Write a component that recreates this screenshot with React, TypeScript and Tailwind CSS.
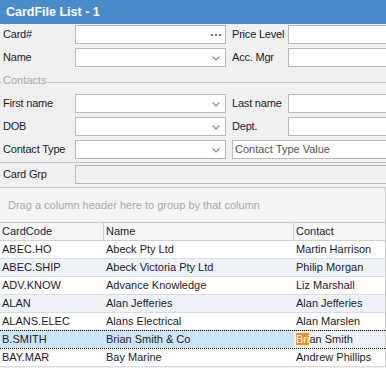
import React from 'react';

interface CardRow {
  code: string;
  name: string;
  contact: string;
}

const rows: CardRow[] = [
  { code: 'ABEC.HO', name: 'Abeck Pty Ltd', contact: 'Martin Harrison' },
  { code: 'ABEC.SHIP', name: 'Abeck Victoria Pty Ltd', contact: 'Philip Morgan' },
  { code: 'ADV.KNOW', name: 'Advance Knowledge', contact: 'Liz Marshall' },
  { code: 'ALAN', name: 'Alan Jefferies', contact: 'Alan Jefferies' },
  { code: 'ALANS.ELEC', name: 'Alans Electrical', contact: 'Alan Marslen' },
  { code: 'B.SMITH', name: 'Brian Smith & Co', contact: 'Brian Smith' },
  { code: 'BAY.MAR', name: 'Bay Marine', contact: 'Andrew Phillips' },
];

const Chevron = () => (
  <svg width="8" height="5" viewBox="0 0 8 5" className="absolute right-[5px] top-[7px]">
    <path d="M0.5 0.5 L4 4 L7.5 0.5" fill="none" stroke="#8a8a8a" strokeWidth="1.2" />
  </svg>
);

// Left-hand input, 151px wide
const Field = ({ kind }: { kind?: 'drop' | 'dots' }) => (
  <div className="relative w-[151px] h-[19px] bg-white border border-[#b9b9b9] shrink-0">
    {kind === 'drop' && <Chevron />}
    {kind === 'dots' && (
      <div className="absolute right-[4px] top-[8px] flex gap-[2px]">
        <span className="w-[2px] h-[2px] bg-[#6a6a6a]" />
        <span className="w-[2px] h-[2px] bg-[#6a6a6a]" />
        <span className="w-[2px] h-[2px] bg-[#6a6a6a]" />
      </div>
    )}
  </div>
);

const Label = ({ text, w }: { text: string; w: string }) => (
  <span className={`${w} shrink-0 text-[11px] tracking-[-0.2px] text-[#1b1b2e] leading-[19px] whitespace-nowrap`}>{text}</span>
);

const Box = ({ w }: { w: string }) => <div className={`${w} h-[19px] bg-white border border-[#b9b9b9] shrink-0`} />;

export default function App() {
  return (
    <div className="w-[386px] h-[368px] overflow-hidden bg-[#f0f0f0] font-['Liberation_Sans',Arial,sans-serif]">
      {/* Title */}
      <div className="h-[24px] bg-[#4a8cca] text-white font-bold text-[12.5px] px-[6px] flex items-center">
        CardFile List - 1
      </div>

      {/* Form */}
      <div className="pt-[1px] flex flex-col">
        <div className="flex items-center h-[19px] pl-[3px]">
          <Label text="Card#" w="w-[72px]" />
          <Field kind="dots" />
          <span className="w-[6px] shrink-0" />
          <Label text="Price Level" w="w-[56px]" />
          <Box w="w-[100px]" />
        </div>
        <div className="flex items-center h-[19px] pl-[3px] mt-[4px]">
          <Label text="Name" w="w-[72px]" />
          <Field kind="drop" />
          <span className="w-[6px] shrink-0" />
          <Label text="Acc. Mgr" w="w-[56px]" />
          <Box w="w-[100px]" />
        </div>

        {/* Contacts group caption */}
        <div className="h-[27px] flex items-center">
          <span className="w-[2px] h-px bg-[#c8c8c8] mt-[3px]" />
          <span className="px-[1px] text-[11px] text-[#a8a8a8]">Contacts</span>
          <span className="flex-1 h-px bg-[#c8c8c8] mt-[3px]" />
        </div>

        <div className="flex items-center h-[19px] pl-[3px]">
          <Label text="First name" w="w-[72px]" />
          <Field kind="drop" />
          <span className="w-[6px] shrink-0" />
          <Label text="Last name" w="w-[56px]" />
          <Box w="w-[100px]" />
        </div>
        <div className="flex items-center h-[19px] pl-[3px] mt-[4px]">
          <Label text="DOB" w="w-[72px]" />
          <Field kind="drop" />
          <span className="w-[6px] shrink-0" />
          <Label text="Dept." w="w-[56px]" />
          <Box w="w-[100px]" />
        </div>
        <div className="flex items-center h-[19px] pl-[3px] mt-[4px]">
          <Label text="Contact Type" w="w-[72px]" />
          <Field kind="drop" />
          <span className="w-[6px] shrink-0" />
          <div className="w-[160px] h-[19px] bg-white border border-[#b9b9b9] shrink-0 text-[11px] leading-[17px] pl-[2px] text-[#555]">
            Contact Type Value
          </div>
        </div>

        <div className="h-px bg-[#c4c4c4] mt-[3px]" />

        <div className="flex items-center h-[19px] pl-[3px] mt-[2px]">
          <Label text="Card Grp" w="w-[72px]" />
          <div className="w-[320px] h-[19px] bg-[#f0f0f0] border border-[#b9b9b9] shrink-0" />
        </div>
      </div>

      {/* Grid */}
      <div className="mt-[3px] border-t border-[#c8c8c8] border-r bg-[#f4f4f4]">
        <div className="h-[35px] flex items-center pl-[8px] text-[11px] text-[#a9a9a9] border-b border-[#c8c8c8]">
          Drag a column header here to group by that column
        </div>
        <div className="flex h-[18px] bg-[#f6f6f6] border-b border-[#d0d0d0] text-[11px] text-[#1b1b2e] leading-[17px]">
          <div className="w-[104px] pl-[2px] border-r border-[#d0d0d0]">CardCode</div>
          <div className="w-[190px] pl-[2px] border-r border-[#d0d0d0]">Name</div>
          <div className="flex-1 pl-[2px]">Contact</div>
        </div>
        {rows.map((r, i) => {
          const selected = r.code === 'B.SMITH';
          const rowBg = i % 2 === 1 ? 'bg-[#eef3f9]' : 'bg-white';
          return (
            <div
              key={r.code}
              className={`flex text-[11px] text-[#1b1b2e] leading-[17px] ${
                selected ? 'h-[19px] -mt-px border-y border-dotted border-black' : `h-[18px] border-b border-[#dcdcdc] ${rowBg}`
              }`}
            >
              <div className={`w-[104px] pl-[2px] ${selected ? 'bg-[#cde6f7]' : ''}`}>{r.code}</div>
              <div className={`w-[190px] pl-[2px] ${selected ? 'bg-[#cde6f7]' : ''}`}>{r.name}</div>
              <div className={`flex-1 pl-[2px] ${selected ? 'bg-[#eef3f9]' : ''}`}>
                {selected ? (
                  <>
                    <span className="bg-[#f7891f] text-white">Bri</span>an Smith
                  </>
                ) : (
                  r.contact
                )}
              </div>
            </div>
          );
        })}
      </div>
    </div>
  );
}
